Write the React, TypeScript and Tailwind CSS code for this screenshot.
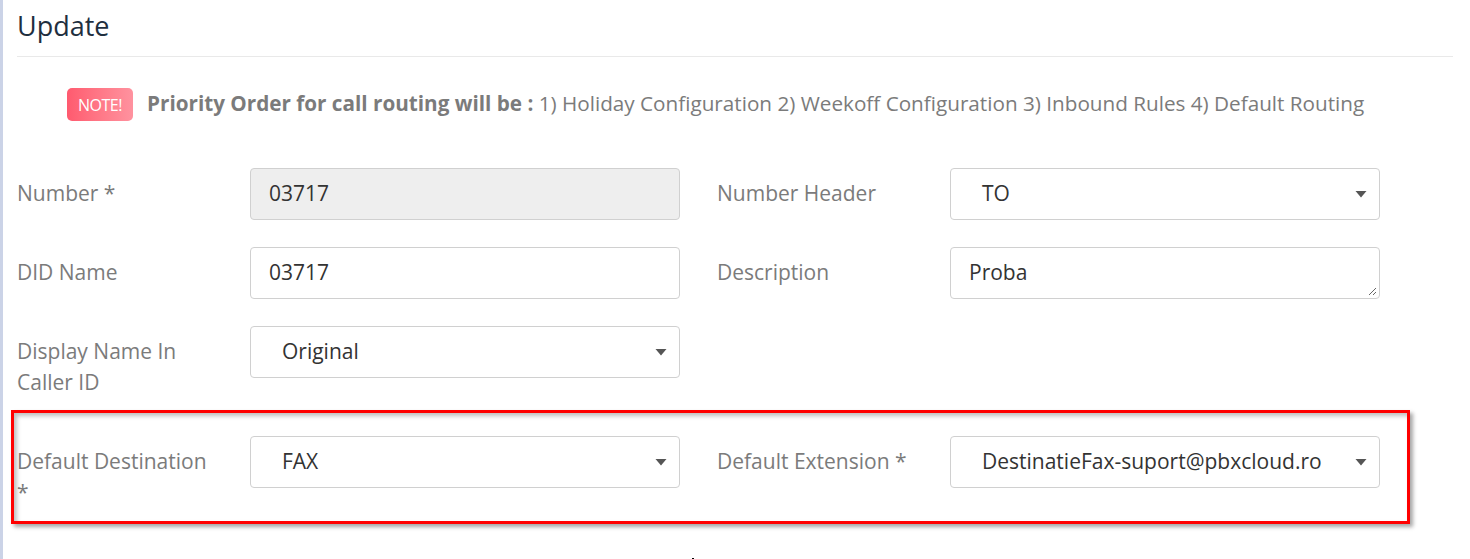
import React from "react";

function Caret() {
  return (
    <svg width="12" height="8" viewBox="0 0 12 8" className="absolute right-[12px] top-1/2 -translate-y-1/2">
      <path d="M0.5 1 L11.5 1 L6 7.5 Z" fill="#555" />
    </svg>
  );
}

function TextInput({ value, disabled }: { value: string; disabled?: boolean }) {
  return (
    <div
      className={`flex h-[52px] w-[430px] items-center rounded-[4px] border border-[#d0d0d0] pl-[18px] text-[21px] text-[#333] ${
        disabled ? "bg-[#eeeeee]" : "bg-white"
      }`}
    >
      {value}
    </div>
  );
}

function SelectBox({ value }: { value: string }) {
  return (
    <div className="relative flex h-[52px] w-[430px] items-center rounded-[4px] border border-[#d0d0d0] bg-white pl-[31px] text-[21px] text-[#333]">
      {value}
      <Caret />
    </div>
  );
}

function TextArea({ value }: { value: string }) {
  return (
    <div className="relative flex h-[52px] w-[430px] items-center rounded-[4px] border border-[#d0d0d0] bg-white pl-[18px] text-[21px] text-[#333]">
      {value}
      <svg width="10" height="10" viewBox="0 0 10 10" className="absolute bottom-[2px] right-[2px]">
        <path d="M9 2 L2 9 M9 6 L6 9" stroke="#666" strokeWidth="1" />
      </svg>
    </div>
  );
}

function Label({ children }: { children: React.ReactNode }) {
  return (
    <div className="w-[233px] shrink-0 py-[10px] pr-[37px] text-[21px] leading-[31px] text-[#7b7b7b]">{children}</div>
  );
}

export default function App() {
  return (
    <div className="flex min-h-[559px] w-full bg-white font-['Open_Sans',sans-serif]">
      <div className="w-[3px] shrink-0 bg-[#cbd3e7]" />
      <div className="flex-1 pl-[14px] pr-[17px]">
        <div className="h-[57px] border-b border-[#e9e9e9] pt-[8px] text-[27px] leading-[36px] text-[#1f2f3f]">
          Update
        </div>

        <div className="mt-[31px] flex items-center pl-[50px]">
          <span className="flex h-[33px] w-[66px] items-center justify-center rounded-[5px] bg-gradient-to-r from-[#ff5a6f] to-[#ff929f] text-[16px] tracking-[-0.5px] text-white">
            NOTE!
          </span>
          <span className="relative top-[-2px] ml-[14px] text-[20.7px] leading-[30px] text-[#7b7b7b]">
            <span className="font-bold">Priority Order for call routing will be :</span> 1) Holiday Configuration 2) Weekoff Configuration 3) Inbound Rules 4) Default Routing
          </span>
        </div>

        <div className="mt-[47px] flex flex-col">
          <div className="mb-[27px] flex">
            <div className="flex w-[700px] items-start">
              <Label>Number *</Label>
              <TextInput value="03717" disabled />
            </div>
            <div className="flex items-start">
              <Label>Number Header</Label>
              <SelectBox value="TO" />
            </div>
          </div>

          <div className="mb-[27px] flex">
            <div className="flex w-[700px] items-start">
              <Label>DID Name</Label>
              <TextInput value="03717" />
            </div>
            <div className="flex items-start">
              <Label>Description</Label>
              <TextArea value="Proba" />
            </div>
          </div>

          <div className="mb-[28px] flex">
            <div className="flex w-[700px] items-start">
              <Label>Display Name In Caller ID</Label>
              <SelectBox value="Original" />
            </div>
          </div>

          <div className="relative flex">
            <div className="pointer-events-none absolute left-[-6px] top-[-26px] h-[114px] w-[1399px] border-[3px] border-[#ff0000] shadow-[3px_3px_4px_rgba(0,0,0,0.35),inset_3px_3px_4px_rgba(0,0,0,0.25)]" />
            <div className="flex w-[700px] items-start">
              <Label>Default Destination *</Label>
              <SelectBox value="FAX" />
            </div>
            <div className="flex items-start">
              <Label>Default Extension *</Label>
              <SelectBox value="DestinatieFax-suport@pbxcloud.ro" />
            </div>
          </div>
          <div className="mt-[40px] ml-[675px] h-[2px] w-[2px] bg-black" />
        </div>
      </div>
    </div>
  );
}
